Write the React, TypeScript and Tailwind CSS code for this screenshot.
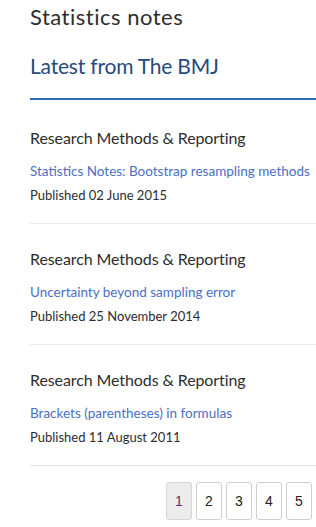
const items = [
  { section: "Research Methods & Reporting", title: "Statistics Notes: Bootstrap resampling methods", date: "Published 02 June 2015" },
  { section: "Research Methods & Reporting", title: "Uncertainty beyond sampling error", date: "Published 25 November 2014" },
  { section: "Research Methods & Reporting", title: "Brackets (parentheses) in formulas", date: "Published 11 August 2011" },
];

export default function App() {
  return (
    <div className="w-[316px] min-h-[527px] bg-white pl-[30px] font-['Lato',sans-serif] text-[#333]">
      <h1 className="pt-[4px] text-[22px] leading-[26px] tracking-[0.5px] text-[#2d2d2d]">Statistics notes</h1>

      <div className="mt-[22px] border-b-2 border-[#2e6bb5] pb-[18px]">
        <h2 className="text-[21px] leading-[28px] tracking-[-0.2px] text-[#264a7c]">Latest from The BMJ</h2>
      </div>

      <ul className="mt-[3px]">
        {items.map((item) => (
          <li key={item.title} className="border-b border-[#e8e8e8] pt-[25px] pb-[18px]">
            <h3 className="text-[16px] leading-[20px] tracking-[-0.1px] text-[#2d2d2d]">{item.section}</h3>
            <a href="#" className="mt-[14px] block text-[13.5px] leading-[18px] text-[#4b6fc4]">
              {item.title}
            </a>
            <p className="mt-[5px] text-[13px] leading-[20px] text-[#2d2d2d]">{item.date}</p>
          </li>
        ))}
      </ul>

      {/* Pagination */}
      <div className="mt-[16px] mr-[4px] flex justify-end gap-[4px]">
        {[1, 2, 3, 4, 5].map((n) => (
          <button
            key={n}
            className={
              n === 1
                ? "h-[38px] w-[26px] rounded-[3px] border border-[#d6d6d6] bg-[#ececec] font-['Liberation_Sans',sans-serif] text-[14px] text-[#6a2c6a]"
                : "h-[38px] w-[26px] rounded-[3px] border border-[#cfcfcf] bg-white font-['Liberation_Sans',sans-serif] text-[14px] text-[#222]"
            }
          >
            {n}
          </button>
        ))}
      </div>
    </div>
  );
}
